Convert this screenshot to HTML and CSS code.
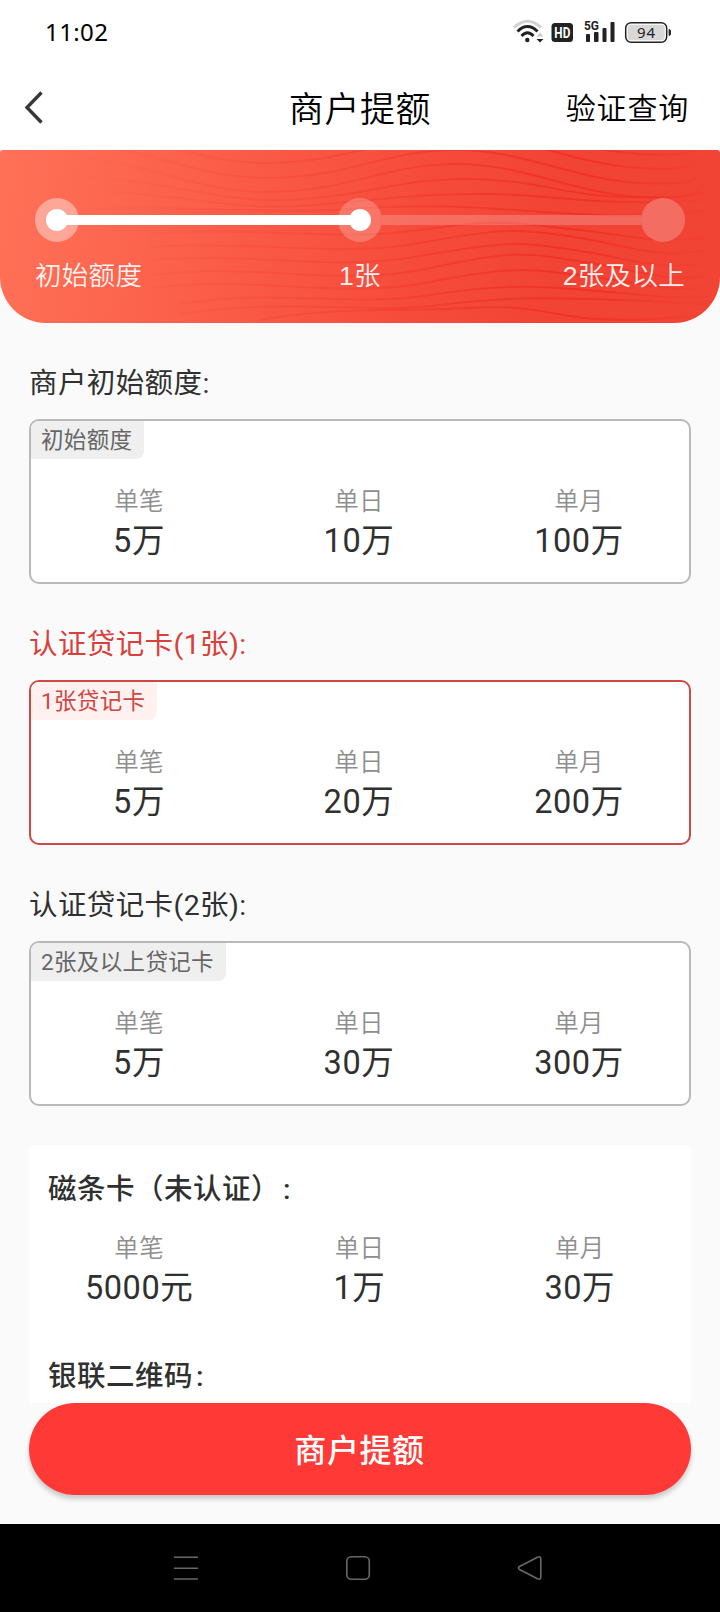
FILE: index.html
```html
<!DOCTYPE html>
<html lang="zh-CN">
<head>
<meta charset="utf-8">
<title>商户提额</title>
<link rel="stylesheet" href="styles.css">
</head>
<body>
<div class="screen">
  <div class="status">
    <span class="clock">11:02</span>
    <svg class="status-icons" width="160" height="30" viewBox="0 0 160 30">
      <g fill="none" stroke-linecap="butt">
        <path d="M1 11.500Q14.500-1 28 11.500" stroke="#d2d2d2" stroke-width="3"/>
        <path d="M4.500 15.500Q14.500 5.500 24.500 15.500" stroke="#222" stroke-width="3"/>
        <path d="M8.500 20Q14.500 13.500 20.500 20" stroke="#222" stroke-width="2.800"/>
      </g>
      <circle cx="14.300" cy="24" r="2.200" fill="#222"/>
      <path d="M23.500 20.500l3.500-4 3.500 4z" fill="#ccc"/>
      <path d="M23.500 23h7l-3.500 3.500z" fill="#222"/>
      <rect x="38.500" y="7" width="21.500" height="19" rx="3.500" fill="#222"/>
      <text class="hd" x="41.300" y="21.700" textLength="16" lengthAdjust="spacingAndGlyphs">HD</text>
      <text class="net" x="71" y="14" textLength="15" lengthAdjust="spacingAndGlyphs">5G</text>
      <g fill="#222"><rect x="73" y="18" width="4" height="8" rx="1"/><rect x="81" y="16" width="4.500" height="10" rx="1"/><rect x="89.500" y="12" width="4" height="14" rx="1"/><rect x="97.500" y="6" width="4" height="20" rx="1"/></g>
      <rect x="112.700" y="6.700" width="41" height="19.600" rx="5.500" fill="#fff" stroke="#222" stroke-width="1.500"/>
      <rect x="114.700" y="8.700" width="37" height="15.600" rx="3.500" fill="#d8d8d8"/>
      <path d="M156 13.500q1.500 0 1.500 1.500v3q0 1.500-1.500 1.500z" fill="#222" stroke="#222" stroke-width=".8"/>
      <text class="pct" x="133.500" y="21.500" text-anchor="middle">94</text>
    </svg>
  </div>
  <div class="appbar">
    <svg class="back" width="20" height="34" viewBox="0 0 20 34"><path d="M18.500 2.500L4 17.500l14.500 15" fill="none" stroke="#383838" stroke-width="3.400"/></svg>
    <span class="title">商户提额</span>
    <span class="action">验证查询</span>
  </div>
  <div class="banner">
    <svg class="waves" width="720" height="173" viewBox="0 0 720 173">
      <defs>
        <linearGradient id="fade" gradientUnits="userSpaceOnUse" x1="60" y1="0" x2="715" y2="0">
          <stop offset="0" stop-color="#e8281c" stop-opacity="0"/>
          <stop offset=".45" stop-color="#e8281c" stop-opacity=".22"/>
          <stop offset=".8" stop-color="#ee2418" stop-opacity=".55"/>
          <stop offset="1" stop-color="#ee2418" stop-opacity=".05"/>
        </linearGradient>
        <path id="high" d="M50 6C150 8 190 43 270 42S380 16 450 14 570 43 640 47 690 38 708 34"/>
      </defs>
      <g fill="none" stroke="url(#fade)" stroke-width="2">
        <use href="#high" y="-43"/><use href="#high" y="-29"/><use href="#high" y="-14"/><use href="#high"/>
        <path d="M50 28C150 22 210 54 290 50S400 28 470 29 570 47 630 47 680 46 708 42"/>
        <path d="M50 44C150 34 220 62 300 56S420 43 490 44 590 57 708 50"/>
        <path d="M50 60C170 52 250 66 350 59S500 60 560 63 640 68 708 60"/>
        <path d="M150 84C260 76 340 92 420 80S510 73 570 79 640 93 708 88"/>
        <path d="M150 97C260 90 340 108 420 93S520 78 580 88 650 108 708 100"/>
        <path d="M150 110C260 102 330 122 420 106S520 92 580 101 650 121 708 113"/>
        <path d="M150 125C260 112 340 138 430 118S530 104 590 113 660 132 708 126"/>
        <path d="M150 138C260 125 340 150 430 132S540 120 600 128 660 142 708 137"/>
        <path d="M180 154C280 138 350 158 430 145S550 137 610 142 660 148 708 147"/>
        <path d="M180 164C280 148 370 164 440 155S550 148 620 150 680 155 708 154"/>
        <path d="M260 170C340 156 400 162 470 158S550 167 600 169 660 168 708 165"/>
      </g>
    </svg>
    <div class="steps">
      <i class="dot done first"></i><i class="line full"></i><i class="dot done"></i><i class="line"></i><i class="dot"></i>
    </div>
    <div class="step-names"><span>初始额度</span><span>1张</span><span>2张及以上</span></div>
  </div>
  <div class="content">
    <section class="level">
      <h2>商户初始额度:</h2>
      <div class="card"><span class="tag">初始额度</span>
        <div class="cols"><div><small>单笔</small><b>5万</b></div><div><small>单日</small><b>10万</b></div><div><small>单月</small><b>100万</b></div></div>
      </div>
    </section>
    <section class="level active">
      <h2>认证贷记卡(1张):</h2>
      <div class="card"><span class="tag">1张贷记卡</span>
        <div class="cols"><div><small>单笔</small><b>5万</b></div><div><small>单日</small><b>20万</b></div><div><small>单月</small><b>200万</b></div></div>
      </div>
    </section>
    <section class="level">
      <h2>认证贷记卡(2张):</h2>
      <div class="card"><span class="tag">2张及以上贷记卡</span>
        <div class="cols"><div><small>单笔</small><b>5万</b></div><div><small>单日</small><b>30万</b></div><div><small>单月</small><b>300万</b></div></div>
      </div>
    </section>
    <section class="panel">
      <h3>磁条卡（未认证）<span class="colon">:</span></h3>
      <div class="cols"><div><small>单笔</small><b>5000元</b></div><div><small>单日</small><b>1万</b></div><div><small>单月</small><b>30万</b></div></div>
      <h3 class="second">银联二维码<span class="colon">:</span></h3>
    </section>
  </div>
  <div class="footer"><button class="submit">商户提额</button></div>
  <div class="nav">
    <svg width="720" height="88" viewBox="0 0 720 88" fill="none" stroke="#686868" stroke-width="1.600">
      <path d="M174 33.200h24M174 44.200h24M174 55h24"/>
      <rect x="346.800" y="32.800" width="22.500" height="22.500" rx="4.500"/>
      <path d="M519.500 42.500L537.500 33.200Q540.800 31.800 540.800 35V53Q540.800 56.200 537.500 54.800L519.500 45.500Q517.500 44 519.500 42.500z"/>
    </svg>
  </div>
</div>
</body>
</html>
```

FILE: styles.css
```css
* { box-sizing: border-box; }
body { margin: 0; background: #fafafa; font-family: Roboto, "Noto Sans CJK SC", sans-serif; color: #303030; }
.screen { width: 720px; height: 1612px; display: flex; flex-direction: column; overflow: hidden; }

.status { height: 66px; flex: none; background: #fff; display: flex; justify-content: space-between; padding: 16px 47px 0 45px; }
.clock { font: 400 24px/32px "Noto Sans", sans-serif; color: #000; letter-spacing: .4px; }
.status-icons { width: 160px; height: 30px; }
.hd { font: 700 14px Roboto, sans-serif; fill: #fff; }
.net { font: 700 12px Roboto, sans-serif; fill: #222; }
.pct { font: 400 15px "Noto Sans", sans-serif; fill: #222; letter-spacing: .8px; }

.appbar { height: 84px; flex: none; background: #fff; display: grid; grid-template-columns: 1fr auto 1fr; align-items: center; padding: 0 31px 2px 23px; color: #000; }
.title { font-size: 35px; line-height: 50px; font-weight: 350; letter-spacing: .6px; padding: 8px 0 0 8px; }
.action { font-size: 30px; line-height: 44px; font-weight: 350; letter-spacing: .8px; justify-self: end; padding-top: 4px; }

.banner { position: relative; height: 173px; flex: none; padding: 48px 35px 0; overflow: hidden; border-radius: 3px 3px 46px 46px; background: linear-gradient(98deg, #ff7158 0%, #fb5f49 28%, #f64b3b 58%, #f24435 76%, #f24435 100%); }
.waves { position: absolute; left: 0; top: 0; }
.steps { position: relative; display: flex; align-items: center; height: 44px; }
.dot { width: 44px; height: 44px; flex: none; border-radius: 50%; background: rgba(255,255,255,.22); display: grid; place-items: center; }
.dot:last-child { background: #f36d62; }
.first { background: rgba(255,255,255,.4); }
.done::before { content: ""; width: 22px; height: 22px; border-radius: 50%; background: #fff; }
.line { flex: 1; height: 10px; background: rgba(255,255,255,.2); }
.full { background: #fff; margin: 0 -14px; flex: 1 0 28px; z-index: 1; }
.step-names { position: relative; display: grid; grid-template-columns: 1fr auto 1fr; margin-top: 14px; color: rgba(255,255,255,.92); font-family: "Liberation Sans", "Noto Sans CJK SC", sans-serif; font-size: 26.500px; line-height: 40px; font-weight: 350; letter-spacing: .3px; }
.step-names span:last-child { text-align: right; }

.content { flex: none; height: 1080px; padding: 42px 29px 0; overflow: hidden; }
.level { height: 261px; }
h2 { margin: 0 0 17px; font-size: 28.500px; line-height: 37px; font-weight: 400; letter-spacing: .4px; }
.card { height: 165px; border: 2px solid #b9b9b9; border-radius: 10px; background: #fff; overflow: hidden; }
.tag { display: block; width: fit-content; height: 38px; padding: 0 12px 0 10px; background: #efefef; color: #666; border-bottom-right-radius: 8px; font-size: 22.500px; line-height: 38px; font-weight: 400; letter-spacing: .35px; }
.active h2 { color: #d9403a; }
.active .card { border-color: #cb4a46; }
.active .tag { background: #fff1f0; color: #cf4643; }
.cols { display: grid; grid-template-columns: repeat(3, 1fr); text-align: center; }
.card .cols { margin: 26px 0 0 -2px; }
.panel .cols { margin-right: 1px; }
.cols small, .cols b { display: block; font-weight: 350; }
.cols small { font-size: 24.500px; line-height: 34px; letter-spacing: .3px; color: #8e8e8e; }
.cols b { font-size: 32.500px; line-height: 44px; font-weight: 400; letter-spacing: .6px; }
.panel { height: 320px; margin-top: -3px; padding-top: 24px; background: #fff; border-radius: 6px; }
h3 { margin: 0 0 21px 19px; font-size: 28.500px; line-height: 42px; font-weight: 500; letter-spacing: .5px; }
.colon { padding-left: 3px; }
.panel .second { margin-top: 46px; }

.footer { position: relative; flex: 1; padding: 0 29px; background: #fafafa; }
.submit { display: block; width: 100%; height: 92px; border: 0; border-radius: 46px; background: #ff3a36; color: #fff; font: 500 32px/89px Roboto, "Noto Sans CJK SC", sans-serif; letter-spacing: .6px; padding: 4px 1px 0 0; box-shadow: 0 4px 5px rgba(0,0,0,.2); }
.nav { height: 88px; flex: none; background: #000; }
.nav svg { display: block; }
```
